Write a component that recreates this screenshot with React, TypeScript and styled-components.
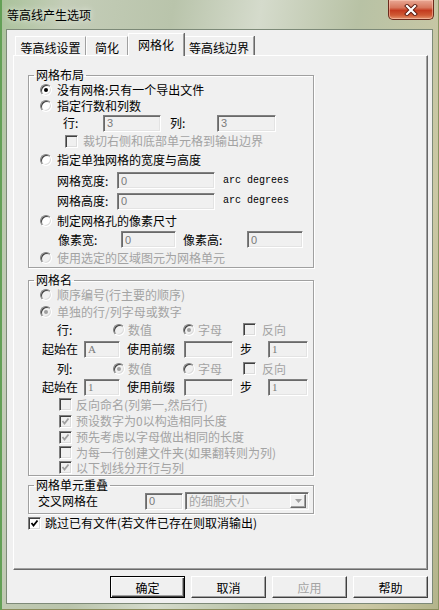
import styled, { createGlobalStyle } from "styled-components";

const GlobalStyle = createGlobalStyle`
  html, body { margin: 0; padding: 0; }
  body {
    font-family: "Noto Sans CJK SC", "Noto Sans", sans-serif;
    font-size: 12px;
    color: #000;
  }
  * { box-sizing: border-box; }
`;

export default function App() {
  return (
    <Window>
      <GlobalStyle />
      <TitleBar>
        <Title>等高线产生选项</Title>
        <CloseButton>
          <svg width="16" height="12" viewBox="0 0 16 12">
            <path d="M4 2 L12 10 M12 2 L4 10" stroke="#5a1a0e" strokeWidth="4" strokeLinecap="square" />
            <path d="M4 2 L12 10 M12 2 L4 10" stroke="#ffffff" strokeWidth="2.2" strokeLinecap="square" />
          </svg>
        </CloseButton>
      </TitleBar>
      <Client>
        <TabStrip>
          <Tab $w={71}>等高线设置</Tab>
          <Tab $w={42}>简化</Tab>
          <Tab $w={56} $active>网格化</Tab>
          <Tab $w={70}>等高线边界</Tab>
        </TabStrip>
        <TabPage>
          <Group $mt={12}>
            <Legend>网格布局</Legend>
            <Row $h={16} $in={7}>
              <Slot $w={17}><Radio $on /></Slot>
              <Text>没有网格:只有一个导出文件</Text>
            </Row>
            <Row $h={16} $in={7}>
              <Slot $w={17}><Radio /></Slot>
              <Text>指定行数和列数</Text>
            </Row>
            <Row $h={18} $in={30}>
              <Text $w={40}>行:</Text>
              <Field $w={58} readOnly value="3" />
              <Text $w={47} $gap={9}>列:</Text>
              <Field $w={59} readOnly value="3" />
            </Row>
            <Row $h={18} $in={32}>
              <Slot $w={18}><Check $off /></Slot>
              <Text $off>裁切右侧和底部单元格到输出边界</Text>
            </Row>
            <Row $h={20} $in={7}>
              <Slot $w={17}><Radio /></Slot>
              <Text>指定单独网格的宽度与高度</Text>
            </Row>
            <Row $h={21} $in={24}>
              <Text $w={60}>网格宽度:</Text>
              <Field $w={98} readOnly value="0" />
              <Unit>arc degrees</Unit>
            </Row>
            <Row $h={20} $in={24}>
              <Text $w={60}>网格高度:</Text>
              <Field $w={98} readOnly value="0" />
              <Unit>arc degrees</Unit>
            </Row>
            <Row $h={19} $in={7}>
              <Slot $w={17}><Radio /></Slot>
              <Text>制定网格孔的像素尺寸</Text>
            </Row>
            <Row $h={19} $in={25}>
              <Text $w={63}>像素宽:</Text>
              <Field $w={55} readOnly value="0" />
              <Text $w={64} $gap={7}>像素高:</Text>
              <Field $w={56} readOnly value="0" />
            </Row>
            <Row $h={18} $in={7}>
              <Slot $w={17}><Radio $off /></Slot>
              <Text $off>使用选定的区域图元为网格单元</Text>
            </Row>
          </Group>

          <Group $mt={5}>
            <Legend>网格名</Legend>
            <Row $h={16} $in={7}>
              <Slot $w={17}><Radio $off /></Slot>
              <Text $off>顺序编号(行主要的顺序)</Text>
            </Row>
            <Row $h={17} $in={7}>
              <Slot $w={17}><Radio $on $off /></Slot>
              <Text $off>单独的行/列字母或数字</Text>
            </Row>
            <Row $h={19} $in={24}>
              <Text $w={56}>行:</Text>
              <Slot $w={15}><Radio $off /></Slot>
              <Text $w={55} $off>数值</Text>
              <Slot $w={15}><Radio $on $off /></Slot>
              <Text $w={45} $off>字母</Text>
              <Slot $w={19}><Check $off /></Slot>
              <Text $off>反向</Text>
            </Row>
            <Row $h={20} $in={9}>
              <Text $w={42}>起始在</Text>
              <Field $w={36} $serif readOnly value="A" />
              <Text $w={57} $gap={7}>使用前缀</Text>
              <Field $w={49} readOnly value="" />
              <Text $w={28} $gap={7}>步</Text>
              <Field $w={40} $serif readOnly value="1" />
            </Row>
            <Row $h={19} $in={24}>
              <Text $w={56}>列:</Text>
              <Slot $w={15}><Radio $on $off /></Slot>
              <Text $w={55} $off>数值</Text>
              <Slot $w={15}><Radio $off /></Slot>
              <Text $w={45} $off>字母</Text>
              <Slot $w={19}><Check $off /></Slot>
              <Text $off>反向</Text>
            </Row>
            <Row $h={18} $in={9}>
              <Text $w={42}>起始在</Text>
              <Field $w={36} $serif readOnly value="1" />
              <Text $w={57} $gap={7}>使用前缀</Text>
              <Field $w={49} readOnly value="" />
              <Text $w={28} $gap={7}>步</Text>
              <Field $w={40} $serif readOnly value="1" />
            </Row>
            <Row $h={17} $in={26}>
              <Slot $w={17}><Check $off /></Slot>
              <Text $off>反向命名(列第一,然后行)</Text>
            </Row>
            <Row $h={16} $in={26}>
              <Slot $w={17}><Check $on $off /></Slot>
              <Text $off>预设数字为0以构造相同长度</Text>
            </Row>
            <Row $h={16} $in={26}>
              <Slot $w={17}><Check $on $off /></Slot>
              <Text $off>预先考虑以字母做出相同的长度</Text>
            </Row>
            <Row $h={15} $in={26}>
              <Slot $w={17}><Check $off /></Slot>
              <Text $off>为每一行创建文件夹(如果翻转则为列)</Text>
            </Row>
            <Row $h={15} $in={26}>
              <Slot $w={17}><Check $on $off /></Slot>
              <Text $off>以下划线分开行与列</Text>
            </Row>
          </Group>

          <Group $mt={2} $pb={3}>
            <Legend>网格单元重叠</Legend>
            <Row $h={18} $in={5}>
              <Text $w={107}>交叉网格在</Text>
              <Field $w={38} readOnly value="0" />
              <Combo>
                <ComboText>的细胞大小</ComboText>
                <ComboArrow>
                  <svg width="7" height="4" viewBox="0 0 7 4">
                    <path d="M0 0 H7 L3.5 4 Z" fill="#a0a0a0" />
                  </svg>
                </ComboArrow>
              </Combo>
            </Row>
          </Group>

          <Row $h={16} $mt={1}>
            <Slot $w={17}><Check $on /></Slot>
            <Text>跳过已有文件(若文件已存在则取消输出)</Text>
          </Row>
        </TabPage>
        <ButtonRow>
          <Button $primary>确定</Button>
          <Button>取消</Button>
          <Button $off>应用</Button>
          <Button>帮助</Button>
        </ButtonRow>
      </Client>
    </Window>
  );
}

function Check({ $on, $off }: { $on?: boolean; $off?: boolean }) {
  return (
    <CheckBox $off={$off}>
      {$on && (
        <svg width="9" height="9" viewBox="0 0 9 9">
          <path d="M1.5 4 L3.5 6.5 L7.5 1.5" fill="none" stroke={$off ? "#a0a0a0" : "#000"} strokeWidth="1.8" />
        </svg>
      )}
    </CheckBox>
  );
}

const Window = styled.div`
  width: 439px;
  height: 610px;
  display: flex;
  flex-direction: column;
  background: linear-gradient(
    100deg,
    #a9c29a 0%,
    #c4cdb8 12%,
    #b9c4ab 32%,
    #d5dbcc 48%,
    #b8c2a5 66%,
    #cbc8a4 86%,
    #b3b48b 100%
  );
  box-shadow: inset 2px 0 0 #63a056, inset -1px 0 0 #8a9463, inset 0 -1px 0 #8a8c5c;
  overflow: hidden;
`;

const TitleBar = styled.div`
  height: 29px;
  display: flex;
  align-items: flex-start;
  justify-content: space-between;
  padding: 0 5px 0 7px;
`;

const Title = styled.div`
  margin-top: 8px;
  line-height: 14px;
  font-size: 12px;
  text-shadow: 0 0 6px rgba(255, 255, 255, 0.9);
`;

const CloseButton = styled.div`
  width: 46px;
  height: 20px;
  display: flex;
  align-items: center;
  justify-content: center;
  border: 1px solid #6b2a1c;
  border-top: none;
  border-radius: 0 0 5px 5px;
  background: linear-gradient(180deg, #e9a895 0%, #d7775d 40%, #c43b1f 55%, #cf5a35 80%, #e5946d 100%);
  box-shadow: inset 0 0 0 1px rgba(255, 210, 190, 0.5);
`;

const Client = styled.div`
  margin: 0 6px;
  height: 575px;
  border: 1px solid #7d8a78;
  background: #f0f0f0;
  display: flex;
  flex-direction: column;
  padding: 0 4px 0 6px;
`;

const TabStrip = styled.div`
  height: 25px;
  display: flex;
  align-items: flex-end;
  padding-left: 2px;
`;

const Tab = styled.div<{ $w: number; $active?: boolean }>`
  width: ${(p) => p.$w}px;
  height: ${(p) => (p.$active ? 22 : 19)}px;
  padding-top: 4px;
  line-height: 14px;
  text-align: center;
  background: #f0f0f0;
  border-top: 1px solid #ffffff;
  border-left: 1px solid #ffffff;
  border-right: 1px solid #a0a0a0;
  box-shadow: 1px 0 0 #696969;
  position: relative;
  z-index: ${(p) => (p.$active ? 1 : 0)};
  margin-bottom: ${(p) => (p.$active ? -1 : 0)}px;
  ${(p) => (p.$active ? "height: 23px;" : "")}
`;

const TabPage = styled.div`
  height: 515px;
  border: 1px solid;
  border-color: #ffffff #696969 #696969 #ffffff;
  box-shadow: inset -1px -1px 0 #a0a0a0;
  padding-left: 14px;
  display: flex;
  flex-direction: column;
  align-items: flex-start;
`;

const Group = styled.fieldset<{ $mt: number; $pb?: number }>`
  width: 286px;
  margin: ${(p) => p.$mt}px 0 0 0;
  padding: 0 4px ${(p) => p.$pb ?? 0}px 4px;
  border: 1px solid #a0a0a0;
  box-shadow: inset 1px 1px 0 #ffffff, 1px 1px 0 #ffffff;
  min-inline-size: 0;
`;

const Legend = styled.legend`
  padding: 0 2px;
  margin-left: 1px;
  line-height: 14px;
  font-size: 12px;
`;

const Row = styled.div<{ $h: number; $in?: number; $mt?: number }>`
  display: flex;
  align-items: center;
  height: ${(p) => p.$h}px;
  padding-left: ${(p) => p.$in ?? 0}px;
  margin-top: ${(p) => p.$mt ?? 0}px;
  white-space: nowrap;
`;

const Slot = styled.span<{ $w: number }>`
  flex: none;
  width: ${(p) => p.$w}px;
  display: flex;
  align-items: center;
`;

const Text = styled.span<{ $w?: number; $gap?: number; $off?: boolean }>`
  flex: none;
  width: ${(p) => (p.$w ? `${p.$w}px` : "auto")};
  margin-left: ${(p) => p.$gap ?? 0}px;
  color: ${(p) => (p.$off ? "#a3a3a3" : "#000")};
  line-height: 14px;
  font-size: 12px;
`;

const Unit = styled.span`
  margin-left: 8px;
  font-family: "Liberation Mono", "DejaVu Sans Mono", monospace;
  font-size: 10px;
  line-height: 14px;
`;

const Radio = styled.span<{ $on?: boolean; $off?: boolean }>`
  width: 12px;
  height: 12px;
  border-radius: 50%;
  border: 1px solid;
  border-color: #808080 #ffffff #ffffff #808080;
  box-shadow: inset 1px 1px 0 #404040, inset -1px -1px 0 #dcdcdc;
  background: ${(p) => (p.$off ? "#f0f0f0" : "#ffffff")};
  display: flex;
  align-items: center;
  justify-content: center;
  &::after {
    content: "";
    width: 4px;
    height: 4px;
    border-radius: 50%;
    background: ${(p) => (p.$off ? "#a0a0a0" : "#000")};
    display: ${(p) => (p.$on ? "block" : "none")};
  }
`;

const CheckBox = styled.span<{ $off?: boolean }>`
  width: 13px;
  height: 13px;
  border: 1px solid;
  border-color: #808080 #ffffff #ffffff #808080;
  box-shadow: inset 1px 1px 0 #404040, inset -1px -1px 0 #dcdcdc;
  background: ${(p) => (p.$off ? "#f0f0f0" : "#ffffff")};
  display: flex;
  align-items: center;
  justify-content: center;
`;

const Field = styled.input<{ $w: number; $serif?: boolean }>`
  flex: none;
  width: ${(p) => p.$w}px;
  height: 17px;
  margin: 0;
  padding: 0 0 0 3px;
  border: 1px solid;
  border-color: #808080 #ffffff #ffffff #808080;
  box-shadow: inset 1px 1px 0 #696969, inset -1px -1px 0 #e3e3e3;
  background: #f0f0f0;
  color: #7a7a7a;
  font-family: ${(p) => (p.$serif ? `"Liberation Serif", serif` : `"Liberation Sans", sans-serif`)};
  font-size: 11px;
  outline: none;
`;

const Combo = styled.div`
  flex: none;
  width: 124px;
  height: 18px;
  margin-left: 2px;
  display: flex;
  align-items: center;
  justify-content: space-between;
  border: 1px solid;
  border-color: #808080 #ffffff #ffffff #808080;
  box-shadow: inset 1px 1px 0 #696969, inset -1px -1px 0 #e3e3e3;
  background: #f0f0f0;
  padding: 0 2px 0 3px;
`;

const ComboText = styled.span`
  color: #a3a3a3;
  line-height: 14px;
  font-size: 12px;
`;

const ComboArrow = styled.span`
  width: 16px;
  height: 14px;
  display: flex;
  align-items: center;
  justify-content: center;
  border: 1px solid;
  border-color: #ffffff #696969 #696969 #ffffff;
  box-shadow: inset -1px -1px 0 #a0a0a0;
  background: #f0f0f0;
`;

const ButtonRow = styled.div`
  margin-top: 6px;
  display: flex;
  justify-content: flex-end;
  gap: 6px;
`;

const Button = styled.div<{ $primary?: boolean; $off?: boolean }>`
  width: 75px;
  height: 22px;
  display: flex;
  align-items: center;
  justify-content: center;
  font-size: 12px;
  color: ${(p) => (p.$off ? "#a3a3a3" : "#000")};
  background: #f0f0f0;
  border: 1px solid;
  border-color: ${(p) => (p.$primary ? "#000" : "#ffffff #404040 #404040 #ffffff")};
  box-shadow: ${(p) =>
    p.$primary
      ? "inset 1px 1px 0 #ffffff, inset -1px -1px 0 #404040, inset -2px -2px 0 #a0a0a0"
      : "inset -1px -1px 0 #a0a0a0"};
`;
